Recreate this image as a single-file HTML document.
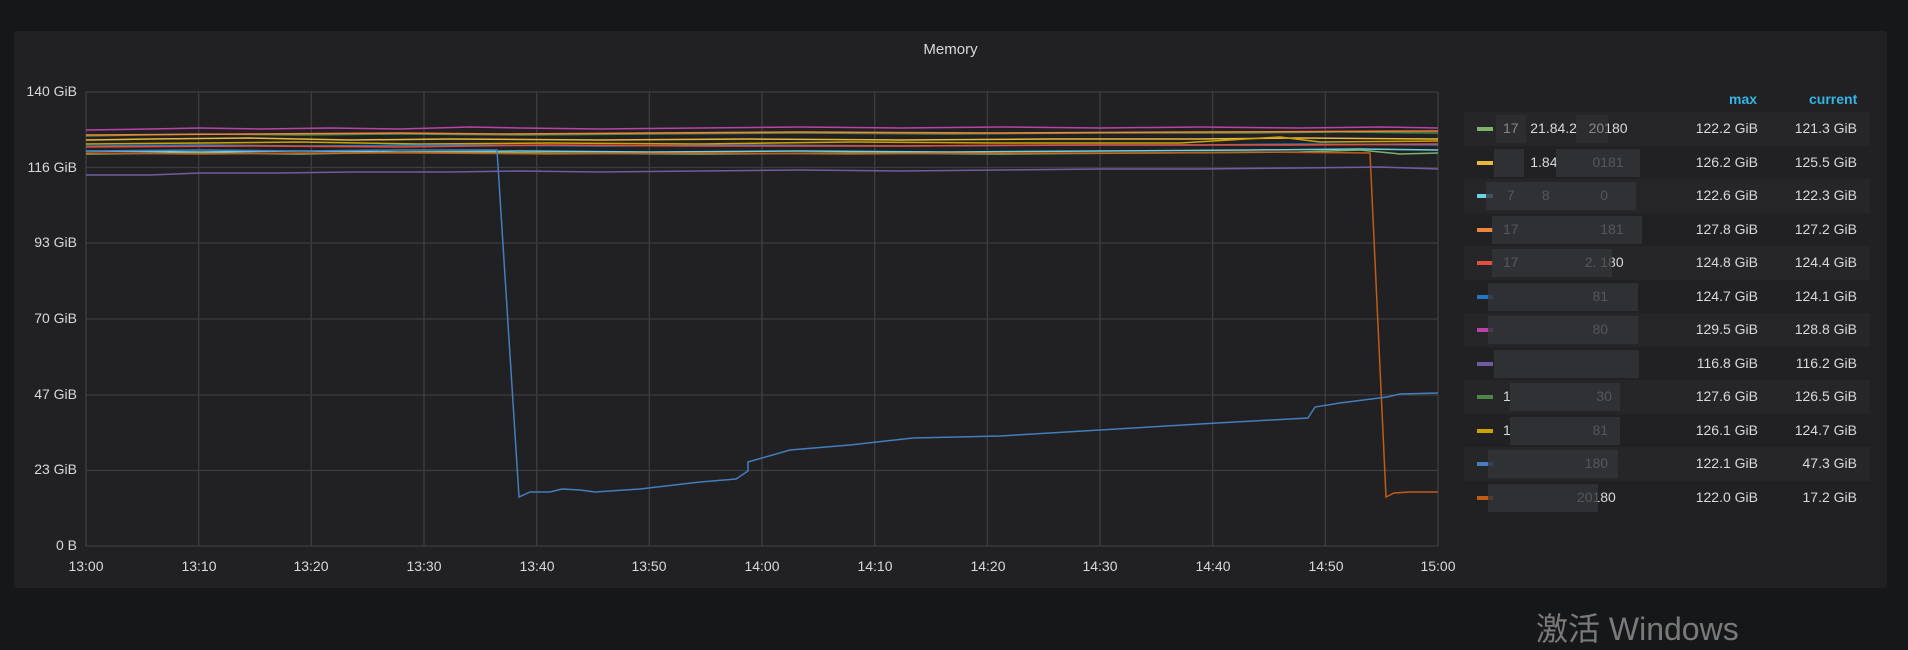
<!DOCTYPE html>
<html><head><meta charset="utf-8"><style>
html,body{margin:0;padding:0;background:#161719;width:1908px;height:625px;overflow:hidden;font-family:"Liberation Sans","Noto Sans CJK SC",sans-serif;}
.panel{position:absolute;left:14px;top:31px;width:1873px;height:557px;background:#212124;border-radius:3px;}
.title{position:absolute;left:0;width:1873px;top:10px;text-align:center;color:#d8d9da;font-size:15px;}
.yl{position:absolute;right:1810px;color:#d8d9da;font-size:14px;text-align:right;white-space:nowrap;}
.xl{position:absolute;top:527px;color:#d8d9da;font-size:14px;width:60px;margin-left:-30px;text-align:center;}
.hdr{position:absolute;top:60px;color:#33b5e5;font-size:14px;font-weight:bold;}
.row{position:absolute;left:1464px;width:406px;height:34px;color:#d8d9da;font-size:14px;}
.row.alt{background:#262629;}
.sw{position:absolute;left:13px;top:15px;width:16px;height:4px;}
.lb{position:absolute;left:39px;top:8px;white-space:nowrap;}
.blur{position:absolute;top:3px;height:28px;background:#333438;opacity:.8;}
.mx{position:absolute;right:112px;top:8px;}
.cu{position:absolute;right:13px;top:8px;}
.wm{position:absolute;left:1536px;top:604px;color:#7a7a7a;font-size:32px;font-family:"Liberation Sans","Noto Sans CJK SC",sans-serif;}
</style></head><body>
<div class="panel">
<div class="title">Memory</div>
<div class="yl" style="top:52px">140 GiB</div>
<div class="yl" style="top:128px">116 GiB</div>
<div class="yl" style="top:203px">93 GiB</div>
<div class="yl" style="top:279px">70 GiB</div>
<div class="yl" style="top:355px">47 GiB</div>
<div class="yl" style="top:430px">23 GiB</div>
<div class="yl" style="top:506px">0 B</div>
<div class="xl" style="left:72px">13:00</div>
<div class="xl" style="left:185px">13:10</div>
<div class="xl" style="left:297px">13:20</div>
<div class="xl" style="left:410px">13:30</div>
<div class="xl" style="left:523px">13:40</div>
<div class="xl" style="left:635px">13:50</div>
<div class="xl" style="left:748px">14:00</div>
<div class="xl" style="left:861px">14:10</div>
<div class="xl" style="left:974px">14:20</div>
<div class="xl" style="left:1086px">14:30</div>
<div class="xl" style="left:1199px">14:40</div>
<div class="xl" style="left:1312px">14:50</div>
<div class="xl" style="left:1424px">15:00</div>
<div class="hdr" style="left:1715px">max</div>
<div class="hdr" style="left:1795px">current</div>
</div>
<svg style="position:absolute;left:0;top:0" width="1908" height="625">
<g stroke="#3e3e41" stroke-width="1.3" fill="none">
<path d="M86 92H1438M86 167.5H1438M86 243H1438M86 319H1438M86 395H1438M86 470.5H1438M86 546H1438"/>
<path d="M86 92V546M198.7 92V546M311.3 92V546M424 92V546M536.7 92V546M649.3 92V546M762 92V546M874.7 92V546M987.3 92V546M1100 92V546M1212.7 92V546M1325.3 92V546M1438 92V546"/>
</g>
<g fill="none" stroke-width="1.5">
<path stroke="#ba43a9" d="M86 130L150 129L200 128L260 129L330 128L400 129L470 127L520 128L600 129L700 128L800 127L900 128L1000 127L1100 128L1200 127L1300 128L1380 127L1438 128"/>
<path stroke="#508642" d="M86 136L200 134L300 135L400 134L520 135L650 134L800 133L950 134L1100 133L1250 133L1340 132L1438 133"/>
<path stroke="#ef843c" d="M86 135L250 134L400 133L500 134L650 133L800 132L1000 133L1200 132L1438 131"/>
<path stroke="#eab839" d="M86 140L150 139L250 138L350 140L450 139L600 140L750 139L900 140L1050 139L1200 139L1300 138L1438 139"/>
<path stroke="#cca300" d="M86 144L200 143L300 142L420 144L550 143L700 144L850 142L1000 143L1180 143L1280 137L1320 142L1438 141"/>
<path stroke="#1f78c1" d="M86 146L200 145L300 146L450 145L600 146L750 145L900 146L1050 145L1200 145L1300 144L1438 145"/>
<path stroke="#e24d42" d="M86 147L250 146L400 147L550 145L700 146L900 146L1100 145L1300 145L1438 144"/>
<path stroke="#6ed0e0" d="M86 151L200 152L300 151L400 152L520 151L650 152L800 151L950 152L1100 151L1250 150L1360 149L1438 150"/>
<path stroke="#7eb26d" d="M86 154L200 153L300 154L420 152L550 153L700 154L850 153L1000 154L1150 153L1300 152L1360 150L1400 154L1438 153"/>
<path stroke="#c15c17" d="M86 153L200 154L300 153L420 153L550 154L700 153L850 154L1000 153L1150 153L1250 152L1370 153L1386 497L1394 493L1410 492L1438 492"/>
<path stroke="#447ebc" d="M86 151L200 150L300 151L400 150L497 150L519 497L530 492L550 492L562 489L580 490L595 492L640 489L700 482L736 479L748 471L748 462L790 450L850 445L913 438L1000 436L1100 430L1217 423L1308 418L1315 407L1340 403L1387 397L1400 394L1438 393"/>
<path stroke="#705da0" d="M86 175L150 175L200 173L280 173L350 172L450 172L520 171L600 172L700 171L800 170L900 171L1000 170L1100 169L1200 169L1300 168L1380 167L1438 169"/>
</g>
</svg>
<div class="row alt" style="top:112px"><div class="sw" style="background:#7eb26d"></div><div class="lb">17&nbsp;&nbsp;&nbsp;21.84.2&nbsp;&nbsp;&nbsp;20180</div><div class="blur" style="left:32px;width:30px;opacity:.5"></div><div class="blur" style="left:112px;width:32px;opacity:.5"></div><div class="mx">122.2 GiB</div><div class="cu">121.3 GiB</div></div>
<div class="row" style="top:145.5px"><div class="sw" style="background:#eab839"></div><div class="lb">&nbsp;&nbsp;&nbsp;&nbsp;&nbsp;&nbsp;&nbsp;1.84&nbsp;&nbsp;&nbsp;&nbsp;&nbsp;&nbsp;&nbsp;&nbsp;&nbsp;0181</div><div class="blur" style="left:30px;width:30px"></div><div class="blur" style="left:92px;width:84px"></div><div class="mx">126.2 GiB</div><div class="cu">125.5 GiB</div></div>
<div class="row alt" style="top:179px"><div class="sw" style="background:#6ed0e0"></div><div class="lb">&nbsp;7&nbsp;&nbsp;&nbsp;&nbsp;&nbsp;&nbsp;&nbsp;8&nbsp;&nbsp;&nbsp;&nbsp;&nbsp;&nbsp;&nbsp;&nbsp;&nbsp;&nbsp;&nbsp;&nbsp;&nbsp;0</div><div class="blur" style="left:22px;width:150px"></div><div class="mx">122.6 GiB</div><div class="cu">122.3 GiB</div></div>
<div class="row" style="top:212.5px"><div class="sw" style="background:#ef843c"></div><div class="lb">17&nbsp;&nbsp;&nbsp;&nbsp;&nbsp;&nbsp;&nbsp;&nbsp;&nbsp;&nbsp;&nbsp;&nbsp;&nbsp;&nbsp;&nbsp;&nbsp;&nbsp;&nbsp;&nbsp;&nbsp;&nbsp;181</div><div class="blur" style="left:28px;width:150px"></div><div class="mx">127.8 GiB</div><div class="cu">127.2 GiB</div></div>
<div class="row alt" style="top:246px"><div class="sw" style="background:#e24d42"></div><div class="lb">17&nbsp;&nbsp;&nbsp;&nbsp;&nbsp;&nbsp;&nbsp;&nbsp;&nbsp;&nbsp;&nbsp;&nbsp;&nbsp;&nbsp;&nbsp;&nbsp;&nbsp;2.&nbsp;180</div><div class="blur" style="left:28px;width:120px"></div><div class="mx">124.8 GiB</div><div class="cu">124.4 GiB</div></div>
<div class="row" style="top:279.5px"><div class="sw" style="background:#1f78c1"></div><div class="lb">&nbsp;&nbsp;&nbsp;&nbsp;&nbsp;&nbsp;&nbsp;&nbsp;&nbsp;&nbsp;&nbsp;&nbsp;&nbsp;&nbsp;&nbsp;&nbsp;&nbsp;&nbsp;&nbsp;&nbsp;&nbsp;&nbsp;&nbsp;81</div><div class="blur" style="left:24px;width:150px"></div><div class="mx">124.7 GiB</div><div class="cu">124.1 GiB</div></div>
<div class="row alt" style="top:313px"><div class="sw" style="background:#ba43a9"></div><div class="lb">&nbsp;&nbsp;&nbsp;&nbsp;&nbsp;&nbsp;&nbsp;&nbsp;&nbsp;&nbsp;&nbsp;&nbsp;&nbsp;&nbsp;&nbsp;&nbsp;&nbsp;&nbsp;&nbsp;&nbsp;&nbsp;&nbsp;&nbsp;80</div><div class="blur" style="left:24px;width:150px"></div><div class="mx">129.5 GiB</div><div class="cu">128.8 GiB</div></div>
<div class="row" style="top:346.5px"><div class="sw" style="background:#705da0"></div><div class="blur" style="left:30px;width:145px"></div><div class="mx">116.8 GiB</div><div class="cu">116.2 GiB</div></div>
<div class="row alt" style="top:380px"><div class="sw" style="background:#508642"></div><div class="lb">1&nbsp;&nbsp;&nbsp;&nbsp;&nbsp;&nbsp;&nbsp;&nbsp;&nbsp;&nbsp;&nbsp;&nbsp;&nbsp;&nbsp;&nbsp;&nbsp;&nbsp;&nbsp;&nbsp;&nbsp;&nbsp;&nbsp;30</div><div class="blur" style="left:46px;width:110px"></div><div class="mx">127.6 GiB</div><div class="cu">126.5 GiB</div></div>
<div class="row" style="top:413.5px"><div class="sw" style="background:#cca300"></div><div class="lb">1&nbsp;&nbsp;&nbsp;&nbsp;&nbsp;&nbsp;&nbsp;&nbsp;&nbsp;&nbsp;&nbsp;&nbsp;&nbsp;&nbsp;&nbsp;&nbsp;&nbsp;&nbsp;&nbsp;&nbsp;&nbsp;81</div><div class="blur" style="left:46px;width:110px"></div><div class="mx">126.1 GiB</div><div class="cu">124.7 GiB</div></div>
<div class="row alt" style="top:447px"><div class="sw" style="background:#447ebc"></div><div class="lb">&nbsp;&nbsp;&nbsp;&nbsp;&nbsp;&nbsp;&nbsp;&nbsp;&nbsp;&nbsp;&nbsp;&nbsp;&nbsp;&nbsp;&nbsp;&nbsp;&nbsp;&nbsp;&nbsp;&nbsp;&nbsp;180</div><div class="blur" style="left:24px;width:130px"></div><div class="mx">122.1 GiB</div><div class="cu">47.3 GiB</div></div>
<div class="row" style="top:480.5px"><div class="sw" style="background:#c15c17"></div><div class="lb">&nbsp;&nbsp;&nbsp;&nbsp;&nbsp;&nbsp;&nbsp;&nbsp;&nbsp;&nbsp;&nbsp;&nbsp;&nbsp;&nbsp;&nbsp;&nbsp;&nbsp;&nbsp;&nbsp;20180</div><div class="blur" style="left:24px;width:110px"></div><div class="mx">122.0 GiB</div><div class="cu">17.2 GiB</div></div>
<div class="wm">激活 Windows</div>
</body></html>
